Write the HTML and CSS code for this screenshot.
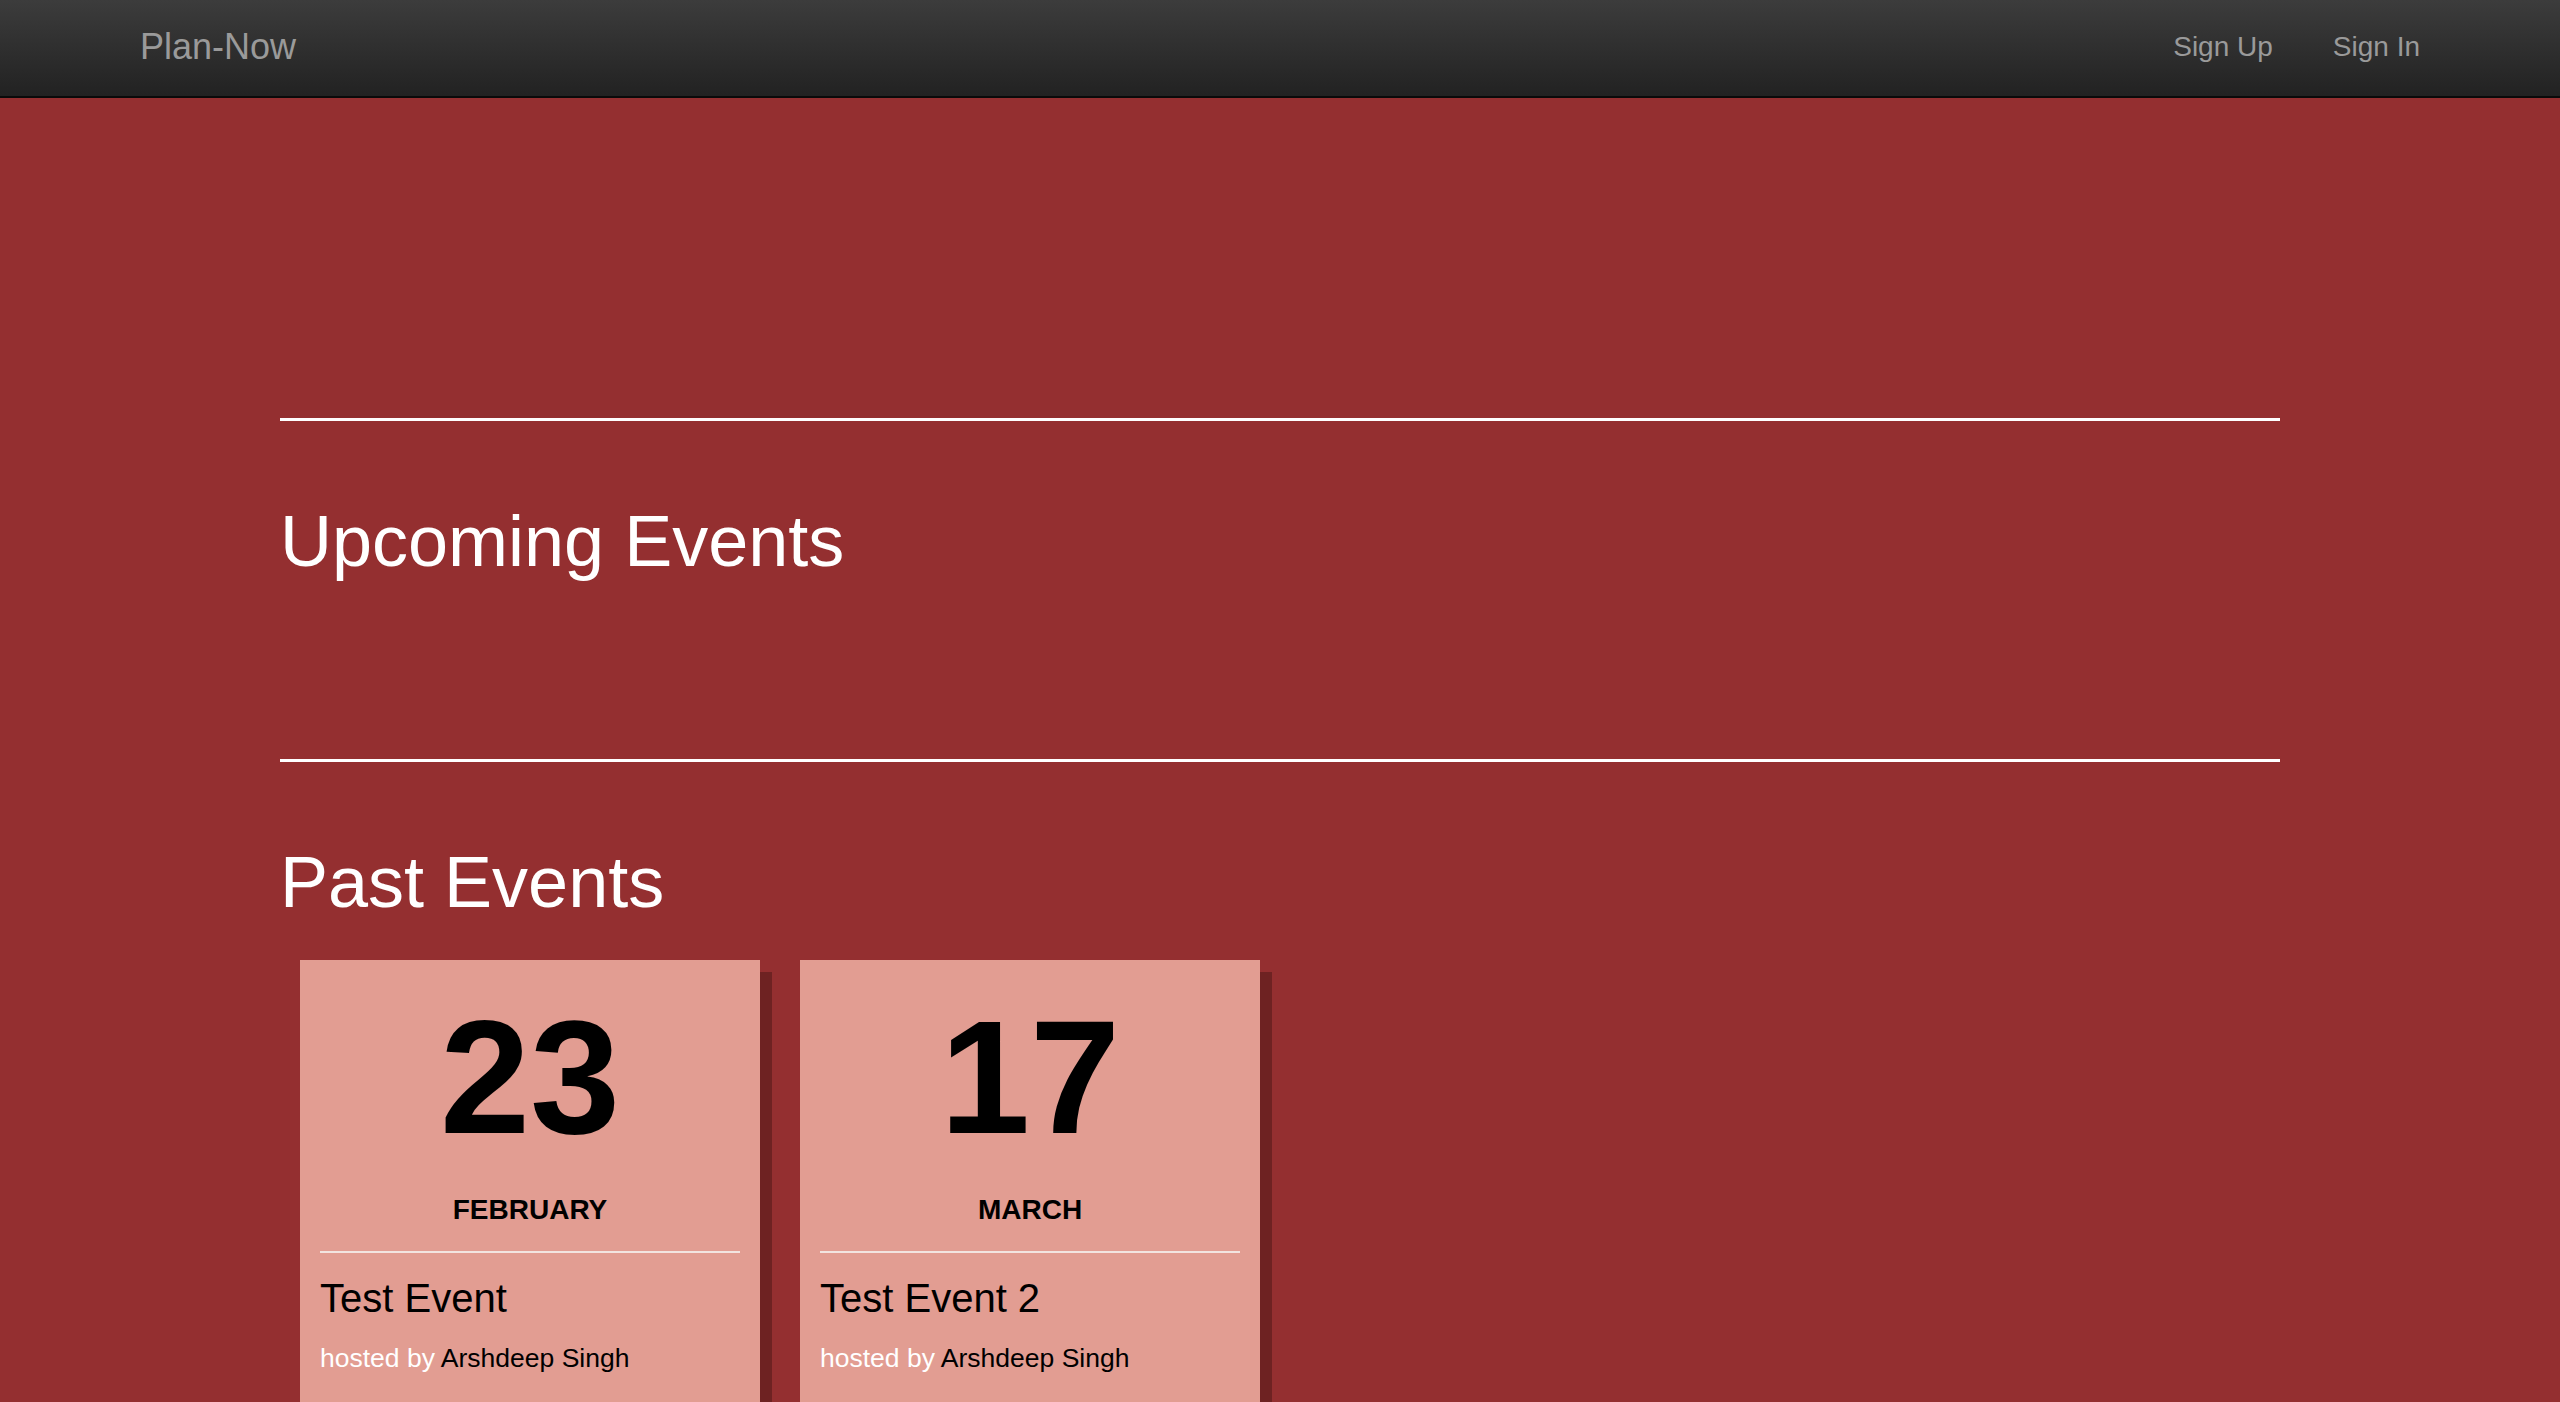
FILE: index.html
```html
<!DOCTYPE html>
<html>
<head>
<meta charset="utf-8">
<title>Plan-Now</title>
<link rel="stylesheet" href="styles.css">
</head>
<body>
<header class="navbar">
  <a class="brand" href="#">Plan-Now</a>
  <nav class="nav-links">
    <a href="#">Sign Up</a>
    <a href="#">Sign In</a>
  </nav>
</header>
<main class="container">
  <section class="events-section upcoming">
    <hr class="rule">
    <h1 class="section-title">Upcoming Events</h1>
    <div class="event-list empty"></div>
  </section>
  <section class="events-section past">
    <hr class="rule">
    <h1 class="section-title">Past Events</h1>
    <div class="event-list">
      <article class="event-card">
        <div class="day">23</div>
        <div class="month">FEBRUARY</div>
        <div class="divider"></div>
        <h2 class="event-title">Test Event</h2>
        <p class="host"><span class="host-label">hosted by</span> Arshdeep Singh</p>
      </article>
      <article class="event-card">
        <div class="day">17</div>
        <div class="month">MARCH</div>
        <div class="divider"></div>
        <h2 class="event-title">Test Event 2</h2>
        <p class="host"><span class="host-label">hosted by</span> Arshdeep Singh</p>
      </article>
    </div>
  </section>
</main>
</body>
</html>
```
FILE: styles.css
```css
html, body {
  margin: 0;
  padding: 0;
}
body {
  background: #942f30;
  font-family: "Liberation Sans", Arial, Helvetica, sans-serif;
  color: #000;
  min-height: 1402px;
}
.navbar {
  height: 96px;
  border-bottom: 2px solid #0a0a0a;
  background: linear-gradient(to bottom, #3c3c3c 0%, #222222 100%);
  display: flex;
  align-items: center;
  justify-content: space-between;
  padding: 0 140px;
}
.brand {
  color: #9a9a9a;
  font-size: 36px;
  text-decoration: none;
  line-height: 1;
  padding-bottom: 2px;
}
.nav-links {
  display: flex;
  margin-right: -30px;
  padding-bottom: 2px;
}
.nav-links a {
  color: #9a9a9a;
  font-size: 28px;
  text-decoration: none;
  padding: 0 30px;
  line-height: 1;
}
.container {
  width: 2000px;
  margin: 0 auto;
  padding-top: 320px;
}
.rule {
  margin: 0;
  border: 0;
  height: 3px;
  background: #ffffff;
}
.section-title {
  margin: 80px 0 0;
  font-size: 72px;
  line-height: 80px;
  font-weight: normal;
  color: #ffffff;
}
.event-list.empty {
  height: 178px;
}
.past .event-list {
  display: flex;
  gap: 40px;
  padding: 38px 20px 0;
}
.event-card {
  width: 460px;
  background: #e29d92;
  box-shadow: 12px 12px 0 #6e2222;
  padding: 0 20px 120px;
  box-sizing: border-box;
}
.day {
  margin-top: 36px;
  font-size: 162px;
  line-height: 162px;
  font-weight: bold;
  text-align: center;
}
.month {
  margin-top: 32px;
  font-size: 28px;
  line-height: 40px;
  font-weight: bold;
  text-align: center;
}
.divider {
  margin-top: 21px;
  height: 2px;
  background: #f2e4e0;
}
.event-title {
  margin: 21px 0 0;
  font-size: 40px;
  line-height: 48px;
  font-weight: normal;
}
.host {
  margin: 16px 0 0;
  font-size: 26.5px;
  line-height: 40px;
}
.host-label {
  color: #ffffff;
}
```
